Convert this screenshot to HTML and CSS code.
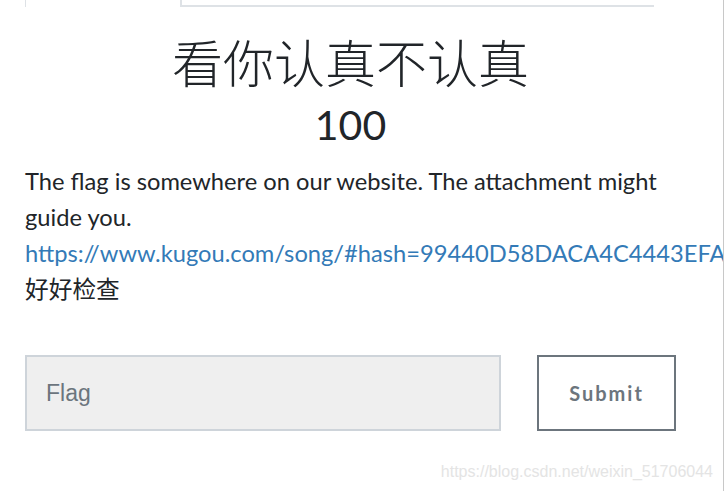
FILE: index.html
```
<!DOCTYPE html>
<html>

<head>
    <meta charset="utf-8" />
    <title>看你认真不认真</title>
    <link rel="stylesheet" href="styles.css">
</head>

<body>
    <div class="modal">
        <div class="tabs">
            <span class="tab"></span>
            <span class="tab-body"></span>
        </div>
        <div class="challenge">
            <h2 class="challenge-name">看你认真不认真</h2>
            <h3 class="challenge-value">100</h3>
            <div class="challenge-desc">
                <p>The flag is somewhere on our website. The attachment might guide you.<br>
                    <a href="#">https://www.kugou.com/song/#hash=99440D58DACA4C4443EFA</a><br>
                    好好检查</p>
            </div>
            <form class="submit-row">
                <input class="flag-input" type="text" placeholder="Flag">
                <button class="submit-btn" type="button">Submit</button>
            </form>
        </div>
        <div class="watermark">https://blog.csdn.net/weixin_51706044</div>
    </div>
</body>

</html>
```
FILE: styles.css
```
html,
body {
    margin: 0;
    padding: 0;
    background: #fff;
}

body {
    font-family: Lato, "Noto Sans CJK SC", sans-serif;
    color: #212529;
    overflow: hidden;
}

.modal {
    position: relative;
    width: 723px;
    height: 491px;
    border-right: 1px solid #c8c8c8;
    overflow: hidden;
}

.tabs {
    display: flex;
    height: 7px;
    padding-left: 25px;
}

.tab {
    width: 154px;
    border-left: 1px solid #dee2e6;
}

.tab-body {
    width: 472px;
    border-left: 2px solid #dee2e6;
    border-bottom: 2px solid #dee2e6;
}

.challenge {
    width: 651px;
    padding-left: 25px;
}

.challenge-name {
    margin: 19px 0 0;
    text-align: center;
    font-family: "Noto Sans CJK SC", sans-serif;
    font-weight: 300;
    font-size: 51px;
    line-height: 70px;
}

.challenge-value {
    margin: 2px 0 0;
    text-align: center;
    font-weight: 400;
    font-size: 41px;
    line-height: 54px;
}

.challenge-desc p {
    margin: 11px 0 0;
    font-size: 23.7px;
    line-height: 36px;
}

.challenge-desc a {
    color: #337ab7;
    text-decoration: none;
    white-space: nowrap;
}

.submit-row {
    display: flex;
    gap: 36px;
    margin-top: 48px;
}

.flag-input {
    box-sizing: border-box;
    width: 476px;
    height: 76px;
    padding: 0 19px;
    background: #efefef;
    border: 2px solid #ced4da;
    font-family: "Liberation Sans", Arial, sans-serif;
    font-size: 23px;
    color: #495057;
    outline: none;
}

.flag-input::placeholder {
    color: #6c757d;
}

.submit-btn {
    box-sizing: border-box;
    width: 139px;
    height: 76px;
    background: #fff;
    border: 2px solid #6c757d;
    color: #6c757d;
    font-family: Lato, sans-serif;
    font-weight: 700;
    font-size: 20px;
    letter-spacing: 2px;
}

.watermark {
    position: absolute;
    right: 10px;
    bottom: 10px;
    font-family: "Liberation Sans", Arial, sans-serif;
    font-size: 16px;
    color: #e4e4e4;
}
```
